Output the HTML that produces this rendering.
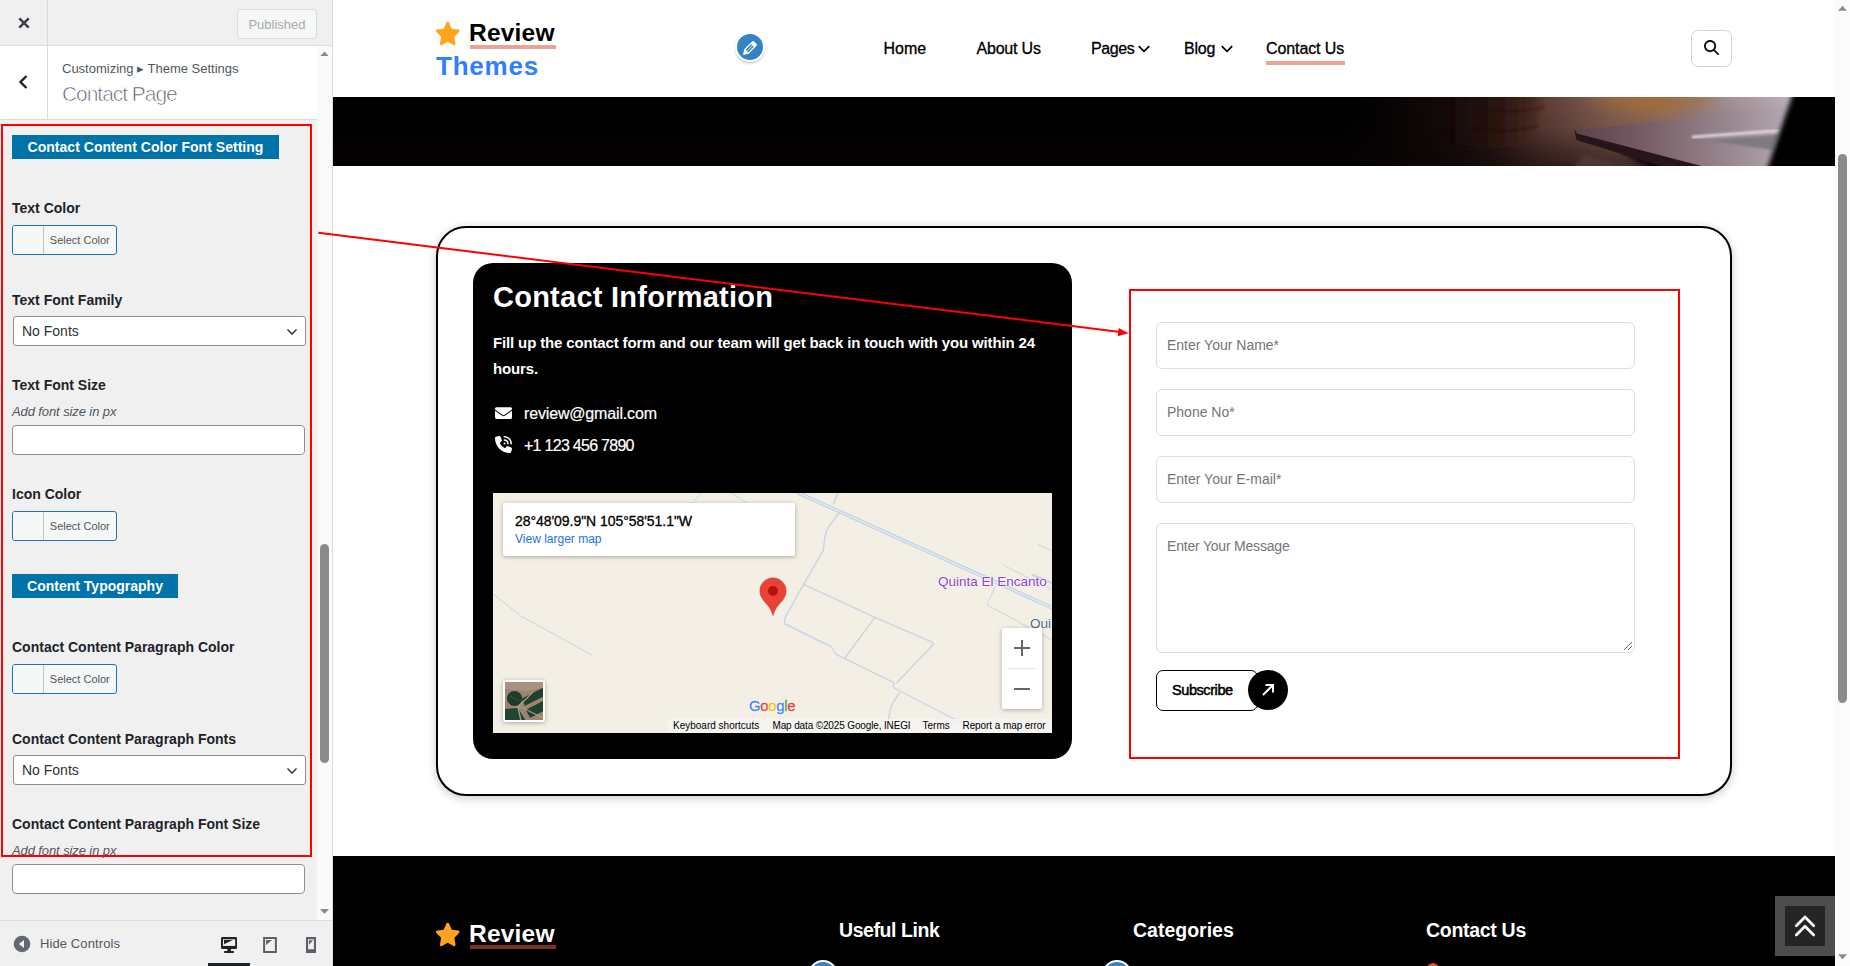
<!DOCTYPE html>
<html>
<head>
<meta charset="utf-8">
<title>Customize: Contact Page</title>
<style>
*{box-sizing:border-box;margin:0;padding:0}
html,body{width:1850px;height:966px;overflow:hidden;background:#fff;font-family:"Liberation Sans",sans-serif;}
.abs{position:absolute}
#sidebar{position:absolute;left:0;top:0;width:333px;height:966px;background:#f0f0f1;border-right:1px solid #dcdcde;overflow:hidden;color:#1d2327}
#sb-head{position:absolute;left:0;top:0;width:332px;height:46px;background:#f0f0f1;border-bottom:1px solid #dcdcde}
#sb-close{position:absolute;left:0;top:0;width:48px;height:45px;border-right:1px solid #dcdcde}
#published{position:absolute;left:237px;top:9px;width:80px;height:30px;border:1px solid #dcdcde;border-radius:3px;background:#f6f7f7;color:#a7aaad;font-size:13px;line-height:29px;text-align:center}
#sb-title{position:absolute;left:0;top:46px;width:317px;height:74px;background:#fff;border-bottom:1px solid #dcdcde}
#sb-back{position:absolute;left:0;top:0;width:48px;height:73px;border-right:1px solid #dcdcde}
#crumb{position:absolute;left:62px;top:15px;font-size:13px;line-height:15px;color:#50575e;white-space:nowrap}
#stitle{position:absolute;left:62px;top:35px;font-size:21px;line-height:26px;color:#50575e;-webkit-text-stroke:0.7px #fff;white-space:nowrap;letter-spacing:-1.05px}
#sb-scroll{position:absolute;left:317px;top:46px;width:15px;height:874px;background:#fafafa}
#sb-thumb{position:absolute;left:3px;top:498px;width:9px;height:219px;border-radius:5px;background:#8b8b8b}
.lbl{position:absolute;left:12px;font-size:14px;font-weight:700;line-height:18px;color:#1d2327;white-space:nowrap}
.desc{position:absolute;left:12px;font-size:13px;font-style:italic;line-height:16px;color:#50575e;white-space:nowrap;letter-spacing:-0.1px}
.bluehd{position:absolute;left:12px;height:24px;background:#0073aa;color:#fff;font-size:14px;font-weight:700;line-height:24px;text-align:center;white-space:nowrap}
.colbtn{position:absolute;left:12px;width:105px;height:30px;border:1px solid #2271b1;border-radius:3px;background:#f6f7f7;overflow:hidden}
.colbtn i{position:absolute;left:0;top:0;width:31px;height:28px;background:#f6f7f7;border-right:1px solid #c3c4c7}
.colbtn span{position:absolute;left:31.300px;top:0;width:71px;text-align:center;font-size:11px;line-height:28px;color:#50575e}
.sel{position:absolute;left:13px;width:293px;height:30px;border:1px solid #8c8f94;border-radius:3px;background:#fff;font-size:14px;line-height:28px;padding-left:8px;color:#2c3338}
.sel svg{position:absolute;right:7px;top:9px}
.inp{position:absolute;left:12px;width:293px;height:30px;border:1px solid #8c8f94;border-radius:4px;background:#fff}
#sb-foot{position:absolute;left:0;top:920px;width:332px;height:46px;background:#f0f0f1;border-top:1px solid #dcdcde}
#preview{position:absolute;left:333px;top:0;width:1517px;height:966px;background:#fff;overflow:hidden}

#pv-head{position:absolute;left:0;top:0;width:1502px;height:97px;background:#fff}
.nav{position:absolute;top:39px;font-size:16px;line-height:20px;color:#000;white-space:nowrap;-webkit-text-stroke:0.3px #000}
#banner{position:absolute;left:0;top:97px;width:1502px;height:69px;background:#000;overflow:hidden}
#pv-scroll{position:absolute;left:1502px;top:0;width:15px;height:966px;background:#fbfbfb}
#pv-thumb{position:absolute;left:3px;top:154px;width:9px;height:549px;border-radius:5px;background:#8b8b8b}
#card{position:absolute;left:103px;top:226px;width:1296px;height:570px;border:2px solid #000;border-radius:30px;background:#fff;box-shadow:0 2px 10px rgba(0,0,0,.22)}
#info{position:absolute;left:140px;top:263px;width:599px;height:496px;background:#000;border-radius:20px;color:#fff}
#map{position:absolute;left:160px;top:493px;width:559px;height:240px;background:#f3efe5;overflow:hidden}
.fin{position:absolute;left:823px;width:479px;height:47px;border:1px solid #ddd;border-radius:6px;background:#fff;font-size:14px;color:#757575;padding-left:10px;line-height:45px;white-space:nowrap}
#footer{position:absolute;left:0;top:856px;width:1502px;height:110px;background:#000}
.fh{position:absolute;top:62.200px;font-size:19.5px;font-weight:700;line-height:24px;color:#fff;white-space:nowrap}
.mt{top:227px;font-size:10px;line-height:12px;color:#000;white-space:nowrap}
</style>
</head>
<body>
<div id="sidebar">
  <div id="sb-head">
    <div id="sb-close"></div>
    <div id="published">Published</div>
  </div>
  <div id="sb-title">
    <div id="sb-back"></div>
    <div id="crumb">Customizing &#9656; Theme Settings</div>
    <div id="stitle">Contact Page</div>
  </div>
  <div id="sb-scroll"><div id="sb-thumb"></div></div>

  <svg id="sb-x" class="abs" style="left:17px;top:16px" width="14" height="14" viewBox="0 0 14 14"><path d="M2.300 2.300 L11.700 11.700 M11.700 2.300 L2.300 11.700" stroke="#3c434a" stroke-width="2.600" fill="none"/></svg>
  <svg id="sb-bk" class="abs" style="left:17px;top:74px" width="12" height="16" viewBox="0 0 12 16"><path d="M9.5 2 L3.5 8 L9.5 14" stroke="#1d2327" stroke-width="2.4" fill="none"/></svg>
  <svg class="abs" style="left:320px;top:50.500px" width="9" height="5.500" viewBox="0 0 10 6"><path d="M0 6 L5 0.5 L10 6Z" fill="#8b8b8b"/></svg>
  <svg class="abs" style="left:320px;top:908.500px" width="9" height="5.500" viewBox="0 0 10 6"><path d="M0 0 L5 5.5 L10 0Z" fill="#8b8b8b"/></svg>

  <div class="bluehd" style="top:135px;width:267px;letter-spacing:0.03px">Contact Content Color Font Setting</div>
  <div class="lbl" style="top:199px">Text Color</div>
  <div class="colbtn" style="top:225px"><i></i><span>Select Color</span></div>
  <div class="lbl" style="top:291px">Text Font Family</div>
  <div class="sel" style="top:316px">No Fonts<svg width="12" height="12" viewBox="0 0 12 12"><path d="M1.5 3.5 L6 8 L10.5 3.5" stroke="#3c434a" stroke-width="1.6" fill="none"/></svg></div>
  <div class="lbl" style="top:376px">Text Font Size</div>
  <div class="desc" style="top:404px">Add font size in px</div>
  <div class="inp" style="top:425px"></div>
  <div class="lbl" style="top:485px">Icon Color</div>
  <div class="colbtn" style="top:511px"><i></i><span>Select Color</span></div>
  <div class="bluehd" style="top:574px;width:166px">Content Typography</div>
  <div class="lbl" style="top:638px">Contact Content Paragraph Color</div>
  <div class="colbtn" style="top:664px"><i></i><span>Select Color</span></div>
  <div class="lbl" style="top:730px">Contact Content Paragraph Fonts</div>
  <div class="sel" style="top:755px">No Fonts<svg width="12" height="12" viewBox="0 0 12 12"><path d="M1.5 3.5 L6 8 L10.5 3.5" stroke="#3c434a" stroke-width="1.6" fill="none"/></svg></div>
  <div class="lbl" style="top:815px">Contact Content Paragraph Font Size</div>
  <div class="desc" style="top:843px">Add font size in px</div>
  <div class="inp" style="top:864px"></div>
  <div id="redbox1" class="abs" style="left:1px;top:124px;width:311px;height:733px;border:2px solid #ff0000"></div>
  <div id="sb-foot">
    <svg class="abs" style="left:13px;top:14px" width="18" height="18" viewBox="0 0 18 18"><circle cx="9" cy="9" r="8.3" fill="#646970"/><path d="M11 5 L5.8 9 L11 13Z" fill="#f0f0f1"/></svg>
    <div class="abs" style="left:40px;top:15px;font-size:13px;line-height:16px;color:#50575e;white-space:nowrap;letter-spacing:0.1px">Hide Controls</div>
    <svg class="abs" style="left:200px;top:4px" width="132" height="41" viewBox="200 925 132 41">
      <rect x="221" y="937" width="16" height="12" rx="1.2" fill="#1d2327"/><rect x="223" y="939.300" width="12.200" height="6.600" fill="#f0f0f1"/><path d="M224 940 H232.800 L224 944.200Z" fill="#1d2327"/><rect x="227.300" y="948.500" width="3.600" height="3" fill="#1d2327"/><rect x="224" y="951" width="10" height="2" rx="0.800" fill="#1d2327"/>
      <rect x="264.100" y="938" width="11.800" height="14" fill="none" stroke="#5b6068" stroke-width="2"/><path d="M266.100 940 H272 L266.100 945.100Z" fill="#5b6068"/>
      <path d="M306 937 H316 V953 H306Z M308.100 939.200 V949.200 H313.900 V939.200Z" fill="#5b6068" fill-rule="evenodd"/><path d="M309 940.200 H313 L309 944.800Z" fill="#5b6068"/>
      <rect x="208" y="963" width="42" height="4" fill="#1d2327"/>
    </svg>
  </div>
</div>
<div id="preview">
  <div id="pv-head">
    <svg class="abs" style="left:102.200px;top:20px" width="25.500" height="26.500" viewBox="0 0 24 24" preserveAspectRatio="none"><path d="M12 1.6c.5 0 .95.28 1.17.73l2.7 5.5 6.05.88c.5.07.9.42 1.06.9.15.47.02 1-.34 1.34l-4.38 4.28 1.03 6.04c.09.5-.12 1-.53 1.29-.4.3-.94.33-1.38.1L12 19.8l-5.4 2.85c-.44.23-.98.2-1.38-.1-.4-.3-.61-.8-.53-1.29l1.03-6.04-4.38-4.28a1.31 1.31 0 0 1-.33-1.34c.15-.48.56-.83 1.05-.9l6.05-.88 2.7-5.5c.23-.45.68-.73 1.18-.73z" fill="#ffa41c"/></svg>
    <div class="abs" id="lg1" style="left:136px;top:17.6px;letter-spacing:0.2px;font-size:24.5px;font-weight:700;line-height:30px;color:#000;white-space:nowrap">Review</div>
    <div class="abs" style="left:137px;top:45px;width:86px;height:4px;background:#eba396"></div>
    <div class="abs" id="lg2" style="left:103px;top:50px;font-size:26px;font-weight:700;line-height:32px;color:#2f80ff;white-space:nowrap;letter-spacing:0.8px">Themes</div>
    <div class="abs" style="left:402.200px;top:32px;width:30px;height:30px;border-radius:50%;background:#3582c4;border:2px solid #fff;box-shadow:0 2px 2px rgba(60,67,74,.22)"></div>
    <svg class="abs" style="left:407.100px;top:37.800px" width="20" height="20" viewBox="0 0 20 20"><path d="M13.89 3.39l2.71 2.72c.46.46.42 1.24.03 1.64l-8.01 8.02-5.56 1.16 1.16-5.58s7.6-7.63 7.99-8.03c.39-.39 1.22-.39 1.68.07zm-2.73 2.79l-5.59 5.61 1.11 1.11 5.54-5.65zm-2.97 8.23l5.58-5.6-1.07-1.08-5.59 5.6z" fill="#fff"/></svg>
    <div class="nav" style="left:550.5px">Home</div>
    <div class="nav" style="left:643.5px;letter-spacing:-0.2px">About Us</div>
    <div class="nav" style="left:758px;letter-spacing:-0.4px">Pages</div>
    <svg class="abs" style="left:805px;top:44.5px" width="12" height="8" viewBox="0 0 12 8"><path d="M0.800 1.200 L6 6.400 L11.200 1.200" stroke="#000" stroke-width="1.700" fill="none"/></svg>
    <div class="nav" style="left:851px;letter-spacing:-0.2px">Blog</div>
    <svg class="abs" style="left:888px;top:44.5px" width="12" height="8" viewBox="0 0 12 8"><path d="M0.800 1.200 L6 6.400 L11.200 1.200" stroke="#000" stroke-width="1.700" fill="none"/></svg>
    <div class="nav" style="left:933px;letter-spacing:-0.1px">Contact Us</div>
    <div class="abs" style="left:933px;top:61px;width:79px;height:3.5px;background:#eba396"></div>
    <div class="abs" style="left:1358px;top:30px;width:41px;height:37px;border:1px solid #d6d0d0;border-radius:7px;background:#fff"></div>
    <svg class="abs" style="left:1371px;top:40px" width="15" height="15" viewBox="0 0 512 512"><path d="M416 208c0 45.900-14.900 88.300-40 122.700L502.600 457.400c12.500 12.500 12.500 32.800 0 45.300s-32.800 12.500-45.300 0L330.700 376c-34.400 25.200-76.800 40-122.700 40C93.100 416 0 322.900 0 208S93.100 0 208 0S416 93.100 416 208zM208 352a144 144 0 1 0 0-288 144 144 0 1 0 0 288z" fill="#111"/></svg>
  </div>
  <div id="banner"><svg width="1502" height="69" viewBox="0 0 1502 69" style="position:absolute;left:0;top:0">
<defs>
<linearGradient id="tb" gradientUnits="userSpaceOnUse" x1="0" x2="1502" y1="0" y2="0">
<stop offset="0" stop-color="#000"/><stop offset="0.670" stop-color="#000"/><stop offset="0.700" stop-color="#060303"/><stop offset="0.735" stop-color="#120908"/><stop offset="0.770" stop-color="#2a1714"/><stop offset="0.805" stop-color="#5d3d37"/><stop offset="0.825" stop-color="#6f4c44"/><stop offset="0.850" stop-color="#86604e"/><stop offset="0.880" stop-color="#94705e"/><stop offset="0.910" stop-color="#9a8282"/><stop offset="0.950" stop-color="#b0a0a8"/><stop offset="0.975" stop-color="#c2b6be"/><stop offset="1" stop-color="#c2b6be"/>
</linearGradient>
<linearGradient id="tbv" x1="0" x2="0" y1="0" y2="1"><stop offset="0" stop-color="#000" stop-opacity="0"/><stop offset="0.450" stop-color="#080304" stop-opacity="0.120"/><stop offset="1" stop-color="#0c0405" stop-opacity="0.620"/></linearGradient>
<linearGradient id="lap" gradientUnits="userSpaceOnUse" x1="1241" x2="1460" y1="0" y2="0"><stop offset="0" stop-color="#5c4048"/><stop offset="0.350" stop-color="#786068"/><stop offset="0.700" stop-color="#98868e"/><stop offset="1" stop-color="#b6aab6"/></linearGradient>
<linearGradient id="hand" gradientUnits="userSpaceOnUse" x1="1108" x2="1215" y1="0" y2="0"><stop offset="0" stop-color="#120806" stop-opacity="0"/><stop offset="0.150" stop-color="#160a08" stop-opacity="0.800"/><stop offset="0.550" stop-color="#2a1610"/><stop offset="0.850" stop-color="#452820"/><stop offset="1" stop-color="#644032"/></linearGradient>
<radialGradient id="org" cx="0.5" cy="0.5" r="0.5"><stop offset="0" stop-color="#a86a2c" stop-opacity="0.900"/><stop offset="0.550" stop-color="#a06a34" stop-opacity="0.550"/><stop offset="1" stop-color="#a06a34" stop-opacity="0"/></radialGradient>
<filter id="b1" x="-0.2" y="-0.2" width="1.4" height="1.4"><feGaussianBlur stdDeviation="1.200"/></filter>
<filter id="b2" x="-0.3" y="-0.3" width="1.6" height="1.6"><feGaussianBlur stdDeviation="2.500"/></filter>
<filter id="b05" x="-0.05" y="-0.2" width="1.1" height="1.4"><feGaussianBlur stdDeviation="0.600"/></filter>
</defs>
<rect width="1502" height="69" fill="url(#tb)"/>
<rect width="1502" height="69" fill="url(#tbv)"/>
<ellipse cx="1322" cy="1" rx="72" ry="21" fill="url(#org)" opacity="0.900"/>
<path d="M1250 58 L1300 72 L1240 72 Z" fill="#8a6a66" opacity="0.250" filter="url(#b2)"/>
<path d="M1285 52 L1400 60 L1400 75 L1320 75 Z" fill="#0c0507" opacity="0.900" filter="url(#b2)"/>
<path d="M1108 -3 L1215 -3 C1217 8 1213 20 1208 28 C1203 40 1192 50 1185 50 C1147 52 1117 48 1108 40 Z" fill="url(#hand)" filter="url(#b1)"/>
<path d="M1150 13 C1175 16 1195 14 1212 10 M1140 31 C1165 36 1190 34 1206 28" stroke="#140806" stroke-width="1.600" fill="none" opacity="0.400" filter="url(#b1)"/>
<path d="M1241.400 33.500 L1385 72 L1337 72 L1243.600 43 Z" fill="#25131a" filter="url(#b05)"/>
<path d="M1242 33.300 L1454 12.400 L1440 72 L1380 72 L1244 36.500 Z" fill="url(#lap)" filter="url(#b05)"/>
<path d="M1378 43.400 L1445 37.700 L1439 53 L1416 49.500 Z" fill="#77777a" opacity="0.850" filter="url(#b1)"/>
<path d="M1360 40 L1446 33.600" stroke="#e6deea" stroke-width="2.800" stroke-linecap="round" opacity="0.900" filter="url(#b1)"/>
<path d="M1461.500 -8 L1515 -8 L1515 78 L1432 78 Z" fill="#060405" filter="url(#b2)"/>
</svg></div>
  <div id="card"></div>
  <div id="info">
    <div class="abs" id="ci-h" style="left:20px;top:16.700px;font-size:29px;font-weight:700;line-height:34px;white-space:nowrap;letter-spacing:0.25px">Contact Information</div>
    <div class="abs" id="ci-p" style="left:20px;top:66.700px;width:570px;font-size:15px;font-weight:700;line-height:26px;letter-spacing:-0.145px">Fill up the contact form and our team will get back in touch with you within 24<br>hours.</div>
    <svg class="abs" style="left:21.500px;top:143.600px" width="17" height="12.500" viewBox="0 0 512 400" preserveAspectRatio="none"><path d="M48 8C21.500 8 0 29.500 0 56c0 15.100 7.100 29.300 19.200 38.400L236.800 257.600c11.400 8.500 27 8.500 38.400 0L492.800 94.400c12.100-9.100 19.200-23.300 19.200-38.400c0-26.500-21.500-48-48-48H48zM0 120V328c0 35.300 28.700 64 64 64H448c35.300 0 64-28.700 64-64V120L294.400 283.200c-22.800 17.100-54 17.100-76.800 0L0 120z" fill="#fff"/></svg>
    <div class="abs" style="left:51px;top:141px;font-size:16px;line-height:20px;white-space:nowrap;letter-spacing:-0.16px;-webkit-text-stroke:0.2px #fff">review@gmail.com</div>
    <svg class="abs" style="left:21.500px;top:173px" width="17" height="17" viewBox="0 0 512 512"><path d="M280 0C408.100 0 512 103.900 512 232c0 13.300-10.700 24-24 24s-24-10.700-24-24c0-101.600-82.400-184-184-184c-13.300 0-24-10.700-24-24s10.700-24 24-24zm8 192a32 32 0 1 1 0 64 32 32 0 1 1 0-64zm-32-72c0-13.300 10.700-24 24-24c75.100 0 136 60.900 136 136c0 13.300-10.700 24-24 24s-24-10.700-24-24c0-48.600-39.400-88-88-88c-13.300 0-24-10.700-24-24zM117.500 1.400c19.400-5.300 39.700 4.600 47.400 23.200l40 96c6.800 16.300 2.100 35.200-11.600 46.300L144 207.300c33.300 70.400 90.300 127.400 160.700 160.700L345 318.700c11.200-13.700 30-18.400 46.300-11.600l96 40c18.600 7.700 28.500 28 23.200 47.400l-24 88C481.800 499.900 466 512 448 512C200.600 512 0 311.400 0 64C0 46 12.100 30.200 29.500 25.400l88-24z" fill="#fff"/></svg>
    <div class="abs" style="left:51px;top:172.700px;font-size:16px;line-height:20px;white-space:nowrap;letter-spacing:-0.72px;-webkit-text-stroke:0.2px #fff">+1 123 456 7890</div>
  </div>
  <div id="map">
    <svg class="abs" style="left:0;top:0" width="559" height="240" viewBox="0 0 559 240">
      <g fill="none" stroke="#c7d5e4" stroke-width="1.4" stroke-linecap="round" stroke-linejoin="round">
        <path d="M305.500 0 L559 114.700" stroke-width="3.6" stroke="#bccde0"/>
        <path d="M305.500 0 L559 114.700" stroke-width="1.6" stroke="#e4ebf2"/>
        <path d="M344.800 0 L340.400 11"/>
        <path d="M346.800 19 C338 30 333 38 332.600 41 C331 48 331 54 330 57.800 L310.600 91.400 L292.500 123.800 C291 127 291 129 292 131 L337.800 153.500 C340 155 341 159 343 161.300 L401 189.700 C400 192 400 193 401 195 L463 227 L480 236"/>
        <path d="M310.600 91.400 L381.800 124.300 L437.400 148.300 C440 149.500 441 150.500 440 151.700 L403.800 189.700"/>
        <path d="M381.800 124.300 L352 165"/>
        <path d="M406.300 200 C401 208 398 213 397.300 215.600 L395.500 227"/>
        <path d="M544.800 51.300 L559 57.800" stroke-width="1"/>
        <path d="M511 72.500 L559 96.600" stroke-width="1"/>
        <path d="M540 82 L559 90" stroke-width="2.4"/>
        <path d="M502 92.700 C499 102 495 108 494.300 112 L559 147" stroke-width="1"/>
        <path d="M0 101 L27.300 122.700 L99.300 162.300" stroke-width="1"/>
        <path d="M199.900 9.800 L208.200 0" stroke-width="1"/>
        <path d="M238.400 0 L253.500 9.800" stroke-width="1"/>
      </g>
    </svg>
    <div class="abs" style="left:445px;top:81px;font-size:13.5px;line-height:16px;color:#8a3fd6;white-space:nowrap;text-shadow:0 0 2px #fff,0 0 2px #fff,0 0 2px #fff">Quinta El Encanto</div>
    <div class="abs" style="left:537px;top:123px;font-size:13.5px;line-height:16px;color:#4d6b7c;white-space:nowrap;text-shadow:0 0 2px #fff,0 0 2px #fff">Oui</div>
    <div class="abs" style="left:10px;top:10px;width:292px;height:53px;background:#fff;border-radius:2px;box-shadow:0 1px 4px rgba(0,0,0,.3)"></div>
    <div class="abs" style="left:22px;top:20px;font-size:14px;line-height:16px;color:#000;white-space:nowrap;letter-spacing:-0.05px;-webkit-text-stroke:0.3px #000">28&deg;48'09.9"N 105&deg;58'51.1"W</div>
    <div class="abs" style="left:22px;top:39px;font-size:12px;line-height:14px;color:#1a73e8;white-space:nowrap">View larger map</div>
    <svg class="abs" style="left:266px;top:84px" width="28" height="40" viewBox="0 0 28 40"><path d="M14 1 C6.800 1 1 6.700 1 13.800 C1 20 5 24 9 28.500 C11.500 31.500 13 34.500 14 38.500 C15 34.500 16.500 31.500 19 28.500 C23 24 27 20 27 13.800 C27 6.700 21.200 1 14 1 Z" fill="#ea4335" stroke="#d73a2d" stroke-width="0.8"/><circle cx="14" cy="14" r="5" fill="#b31412"/></svg>
    <div class="abs" style="left:509px;top:135px;width:40px;height:81px;background:#fff;border-radius:2px;box-shadow:0 1px 4px rgba(0,0,0,.3)"></div>
    <svg class="abs" style="left:509px;top:135px" width="40" height="81" viewBox="0 0 40 81"><path d="M12 20 H28 M20 12 V28 M12 61 H28" stroke="#666" stroke-width="2" fill="none"/><path d="M5 40.500 H35" stroke="#e6e6e6" stroke-width="1"/></svg>
    <div class="abs" style="left:10px;top:187px;width:42px;height:42px;background:#fff;border-radius:2px;box-shadow:0 1px 4px rgba(0,0,0,.3)"></div>
    <svg class="abs" style="left:12px;top:189px" width="38" height="38" viewBox="0 0 38 38"><defs><filter id="tb1"><feGaussianBlur stdDeviation="0.700"/></filter></defs><rect width="38" height="38" fill="#9a8573"/><g filter="url(#tb1)"><path d="M0 0 H38 V6 L20 9 L0 7Z" fill="#a89382"/><circle cx="9.500" cy="16.500" r="7.600" fill="#1d3a2a"/><path d="M5 14 L14 19" stroke="#3d5f4a" stroke-width="1"/><g transform="rotate(-27 28 22)"><rect x="20" y="12" width="26" height="8" fill="#21402e"/><rect x="19" y="24" width="28" height="9" fill="#21402e"/></g><path d="M-1 27 L13 26 L21 39 L-1 39Z" fill="#244433"/><path d="M12 26 L28 10 M13 25 L16 39 M14 24 L38 36" stroke="#a99a86" stroke-width="1.300" fill="none"/></g></svg>
    <div class="abs" id="glogo" style="left:256px;top:203px;font-size:15px;line-height:20px;white-space:nowrap;letter-spacing:-0.35px;-webkit-text-stroke:0.3px;text-shadow:0 0 1.5px #fff,0 0 1.5px #fff,0 0 1.5px #fff"><span style="color:#4285f4">G</span><span style="color:#ea4335">o</span><span style="color:#fbbc05">o</span><span style="color:#4285f4">g</span><span style="color:#34a853">l</span><span style="color:#ea4335">e</span></div>
    <div class="abs" style="left:175px;top:226px;width:384px;height:14px;background:rgba(245,245,245,.72)"></div>
    <div class="abs mt" style="left:180px">Keyboard shortcuts</div>
    <div class="abs mt" style="left:279.500px;letter-spacing:-0.14px">Map data &copy;2025 Google, INEGI</div>
    <div class="abs mt" style="left:429.500px">Terms</div>
    <div class="abs mt" style="left:469.500px;letter-spacing:-0.08px">Report a map error</div>
  </div>
<div class="fin" style="top:322px">Enter Your Name*</div>
  <div class="fin" style="top:389px">Phone No*</div>
  <div class="fin" style="top:456px">Enter Your E-mail*</div>
  <div class="fin" style="top:523px;height:130px;line-height:44px;letter-spacing:-0.2px">Enter Your Message</div>
  <svg class="abs" style="left:1290px;top:641px" width="10" height="10" viewBox="0 0 10 10"><path d="M9 1 L1 9 M9 5 L5 9" stroke="#666" stroke-width="1" fill="none"/></svg>
  <div class="abs" id="subbtn" style="left:823px;top:670px;width:102px;height:41px;border:1.5px solid #000;border-radius:7px;background:#fff;font-size:14.500px;font-weight:400;-webkit-text-stroke:0.500px #000;line-height:39.500px;padding-left:15px;color:#000;letter-spacing:-0.42px">Subscribe</div>
  <div class="abs" style="left:915px;top:670px;width:40px;height:40px;border-radius:50%;background:#000"></div>
  <svg class="abs" style="left:927px;top:682px" width="16" height="16" viewBox="0 0 16 16"><path d="M3 13 L12.5 3.5 M5.5 3 H13 V10.5" stroke="#fff" stroke-width="2" fill="none"/></svg>
  <div id="redbox2" class="abs" style="left:796px;top:289px;width:551px;height:470px;border:2px solid #ff0000"></div>
  <div id="footer">
    <svg class="abs" style="left:102.200px;top:65px" width="25.500" height="26.500" viewBox="0 0 24 24" preserveAspectRatio="none"><path d="M12 1.6c.5 0 .95.28 1.17.73l2.7 5.5 6.05.88c.5.07.9.42 1.06.9.15.47.02 1-.34 1.34l-4.38 4.28 1.03 6.04c.09.5-.12 1-.53 1.29-.4.3-.94.33-1.38.1L12 19.8l-5.4 2.850c-.44.23-.98.2-1.38-.1-.4-.3-.61-.8-.53-1.290l1.030-6.040-4.380-4.280a1.310 1.310 0 0 1-.33-1.340c.15-.48.56-.83 1.050-.9l6.050-.88 2.700-5.500c.23-.45.68-.73 1.180-.73z" fill="#ffa41c"/></svg>
    <div class="abs" style="left:136px;top:63.300px;letter-spacing:0.2px;font-size:24.500px;font-weight:700;line-height:30px;color:#fff;white-space:nowrap">Review</div>
    <div class="abs" style="left:137px;top:89.200px;width:86px;height:4.300px;background:#7c3220"></div>
    <div class="fh" style="left:506px;letter-spacing:-0.42px">Useful Link</div>
    <div class="fh" style="left:800px">Categories</div>
    <div class="fh" style="left:1093px;letter-spacing:-0.3px">Contact Us</div>
    <div class="abs" style="left:475px;top:104px;width:30px;height:30px;border-radius:50%;background:#3582c4;border:2px solid #fff"></div>
    <div class="abs" style="left:769px;top:104px;width:30px;height:30px;border-radius:50%;background:#3582c4;border:2px solid #fff"></div>
    <div class="abs" style="left:1094px;top:106.500px;width:12px;height:12px;border-radius:50%;background:#e0522a"></div>
  </div>
  <div class="abs" style="left:1442px;top:896px;width:60px;height:60px;background:#4d4d4d"></div>
  <div class="abs" style="left:1452px;top:906px;width:40px;height:40px;background:#262424"></div>
  <svg class="abs" style="left:1452px;top:906px" width="40" height="40" viewBox="0 0 40 40"><path d="M11.300 19.800 L20 11 L28.700 19.800 M11.300 29 L20 20.200 L28.700 29" stroke="#fff" stroke-width="2.700" fill="none" stroke-linecap="round" stroke-linejoin="round"/></svg>
  <div id="pv-scroll"><div id="pv-thumb"></div>
    <svg class="abs" style="left:3px;top:5px" width="9" height="6" viewBox="0 0 10 6"><path d="M0 6 L5 0.5 L10 6Z" fill="#8b8b8b"/></svg>
    <svg class="abs" style="left:3px;top:954px" width="9" height="6" viewBox="0 0 10 6"><path d="M0 0 L5 5.5 L10 0Z" fill="#8b8b8b"/></svg>
  </div>
</div>
<svg id="anno" style="position:absolute;left:0;top:0;pointer-events:none" width="1850" height="966" viewBox="0 0 1850 966"><path d="M318.300 232.800 L1120 331.950" stroke="#ff0000" stroke-width="2" fill="none"/><path d="M1128.600 333.300 L1118.700 328 L1117.700 336.200 Z" fill="#ff0000"/></svg>
</body>
</html>
